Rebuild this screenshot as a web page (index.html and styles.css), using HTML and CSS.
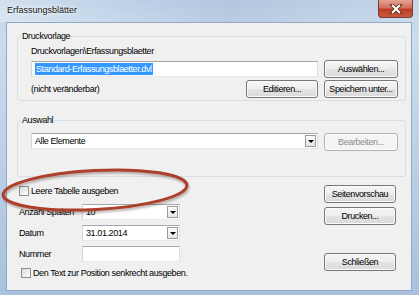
FILE: index.html
```html
<!DOCTYPE html>
<html>
<head>
<meta charset="utf-8">
<link rel="stylesheet" href="styles.css">
</head>
<body>
<div class="window">
  <div class="titlebar">
    <span class="title">Erfassungsblätter</span>
    <div class="close">
      <svg width="12" height="10" viewBox="0 0 12 10">
        <path d="M2 1 L10 9 M10 1 L2 9" stroke="#5a2a22" stroke-width="3.6" stroke-linecap="round"/>
        <path d="M2 1 L10 9 M10 1 L2 9" stroke="#fff" stroke-width="2"/>
      </svg>
    </div>
  </div>

  <div class="client">
    <fieldset class="group first">
      <legend>Druckvorlage</legend>
      <div class="inner">
        <div class="path">Druckvorlagen\Erfassungsblaetter</div>
        <div class="row mid">
          <div class="field wide"><span class="sel">Standard-Erfassungsblaetter.dvl</span></div>
          <button class="btn">Auswählen...</button>
        </div>
        <div class="row mid second">
          <span class="note">(nicht veränderbar)</span>
          <button class="btn push">Editieren...</button>
          <button class="btn">Speichern unter...</button>
        </div>
      </div>
    </fieldset>

    <fieldset class="group choice">
      <legend>Auswahl</legend>
      <div class="inner">
        <div class="row top">
          <div class="field combo wide">Alle Elemente<span class="arrow"></span></div>
          <button class="btn" disabled>Bearbeiten...</button>
        </div>
      </div>
    </fieldset>

    <div class="lower">
      <div class="options">
        <label class="check"><span class="box"></span>Leere Tabelle ausgeben</label>
        <div class="fields">
          <span>Anzahl Spalten</span>
          <div class="field combo">10<span class="arrow"></span></div>
          <span>Datum</span>
          <div class="field combo">31.01.2014<span class="arrow"></span></div>
          <span>Nummer</span>
          <div class="field"></div>
        </div>
        <label class="check last"><span class="box"></span>Den Text zur Position senkrecht ausgeben.</label>
      </div>
      <div class="actions">
        <button class="btn">Seitenvorschau</button>
        <button class="btn">Drucken...</button>
        <button class="btn close-btn">Schließen</button>
      </div>
    </div>
  </div>

  <svg class="mark" width="419" height="295" viewBox="0 0 419 295">
    <ellipse cx="95" cy="190" rx="92" ry="19.5" transform="rotate(-3 95 190)" fill="none" stroke="#ad402b" stroke-width="3"/>
  </svg>
</div>
</body>
</html>
```

FILE: styles.css
```css
html, body {
    margin: 0;
}
body {
    width: 419px;
    height: 295px;
    overflow: hidden;
    font-family: "Liberation Sans", Arial, sans-serif;
    font-size: 9px;
    letter-spacing: -0.4px;
    color: #000;
}
.window {
    position: relative;
    width: 419px;
    height: 295px;
    display: flex;
    flex-direction: column;
    background: linear-gradient(180deg, #bcd0e7 0%, #cbdcee 12%, #b9cee6 60%, #a9c1dd 100%);
}
.titlebar {
    height: 22px;
    display: flex;
    justify-content: space-between;
    align-items: flex-start;
    padding-left: 7px;
    background: linear-gradient(90deg, rgba(255,255,255,0.35) 0%, rgba(255,255,255,0) 30%, rgba(120,140,170,0.15) 55%, rgba(255,255,255,0.1) 100%);
}
.title {
    margin-top: 4px;
    line-height: 12px;
    letter-spacing: 0;
    color: #111;
    text-shadow: 0 0 5px #fff, 0 0 3px #fff;
}
.close {
    width: 35px;
    height: 18px;
    margin-right: 6px;
    box-sizing: border-box;
    border: 1px solid #7a3a33;
    border-top: none;
    border-radius: 0 0 4px 4px;
    background: linear-gradient(180deg, #e5a293 0%, #d0705c 45%, #bd3b22 55%, #c95a3e 100%);
    display: flex;
    align-items: center;
    justify-content: center;
}
.client {
    flex: 1;
    margin: 0 7px 4px 6px;
    padding: 7px 5px 0 10px;
    background: #f0f0f0;
    border: 1px solid #94aac4;
}

/* group boxes */
.group {
    margin: 0;
    padding: 0 7px 2px 3px;
    border: 1px solid #d5dfe5;
    border-radius: 3px;
}
.group legend {
    padding: 0 1px;
    line-height: 12px;
}
.group .inner {
    padding-left: 10px;
}
.path {
    margin-top: 3px;
    line-height: 12px;
}
.row {
    display: flex;
    gap: 6px;
}
.row.mid {
    align-items: center;
    margin-top: 3px;
}
.row.mid.second {
    margin-top: 2px;
}
.row.top {
    align-items: flex-start;
    margin-top: 7px;
}
.choice {
    margin-top: 13px;
    padding-bottom: 25px;
}
.note {
    line-height: 12px;
}
.push {
    margin-left: auto;
}

/* controls */
.btn {
    box-sizing: border-box;
    width: 74px;
    height: 18px;
    padding: 0;
    font: inherit;
    letter-spacing: inherit;
    color: #000;
    border: 1px solid #777;
    border-radius: 3px;
    background: linear-gradient(180deg, #f5f5f5 0%, #eeeeee 48%, #e3e3e3 52%, #dadada 100%);
    box-shadow: inset 0 0 0 1px #fbfbfb;
}
.push {
    width: 72px;
}
.btn:disabled {
    color: #8d8d8d;
    border-color: #adb2b5;
    background: #f4f4f4;
}
.field {
    box-sizing: border-box;
    height: 16px;
    display: flex;
    align-items: center;
    padding-left: 3px;
    background: #fff;
    border: 1px solid;
    border-color: #a3a6ad #dbdfe6 #e3e9ef #d5d8df;
}
.field.wide {
    width: 287px;
}
.sel {
    line-height: 12px;
    padding: 0 1px;
    color: #fff;
    background: #3399ff;
}
.combo {
    justify-content: space-between;
    padding-right: 1px;
}
.arrow {
    box-sizing: border-box;
    width: 11px;
    height: 12px;
    border: 1px solid #9a9a9a;
    background: linear-gradient(180deg, #fafafa, #e6e6e6);
    display: flex;
    align-items: center;
    justify-content: center;
}
.arrow::after {
    content: "";
    border-left: 3px solid transparent;
    border-right: 3px solid transparent;
    border-top: 3px solid #000;
}

/* lower area */
.lower {
    display: flex;
    justify-content: space-between;
    margin-top: 8px;
    padding: 0 10px 0 2px;
}
.check {
    display: flex;
    align-items: center;
    gap: 2px;
    line-height: 12px;
}
.box {
    box-sizing: border-box;
    width: 10px;
    height: 10px;
    border: 1px solid #8e8f8f;
    background: linear-gradient(135deg, #dadada, #fdfdfd);
}
.check.last {
    margin: 5px 0 0 2px;
}
.fields {
    display: grid;
    grid-template-columns: 63px 98px;
    grid-auto-rows: 16px;
    row-gap: 5px;
    align-items: center;
    margin-top: 7px;
}
.actions {
    display: flex;
    flex-direction: column;
    gap: 4px;
}
.actions .btn {
    width: 72px;
}
.close-btn {
    margin-top: 24px;
}

.mark {
    position: absolute;
    left: 0;
    top: 0;
    pointer-events: none;
    filter: drop-shadow(1px 2px 1px rgba(60, 30, 20, 0.35));
}
```
